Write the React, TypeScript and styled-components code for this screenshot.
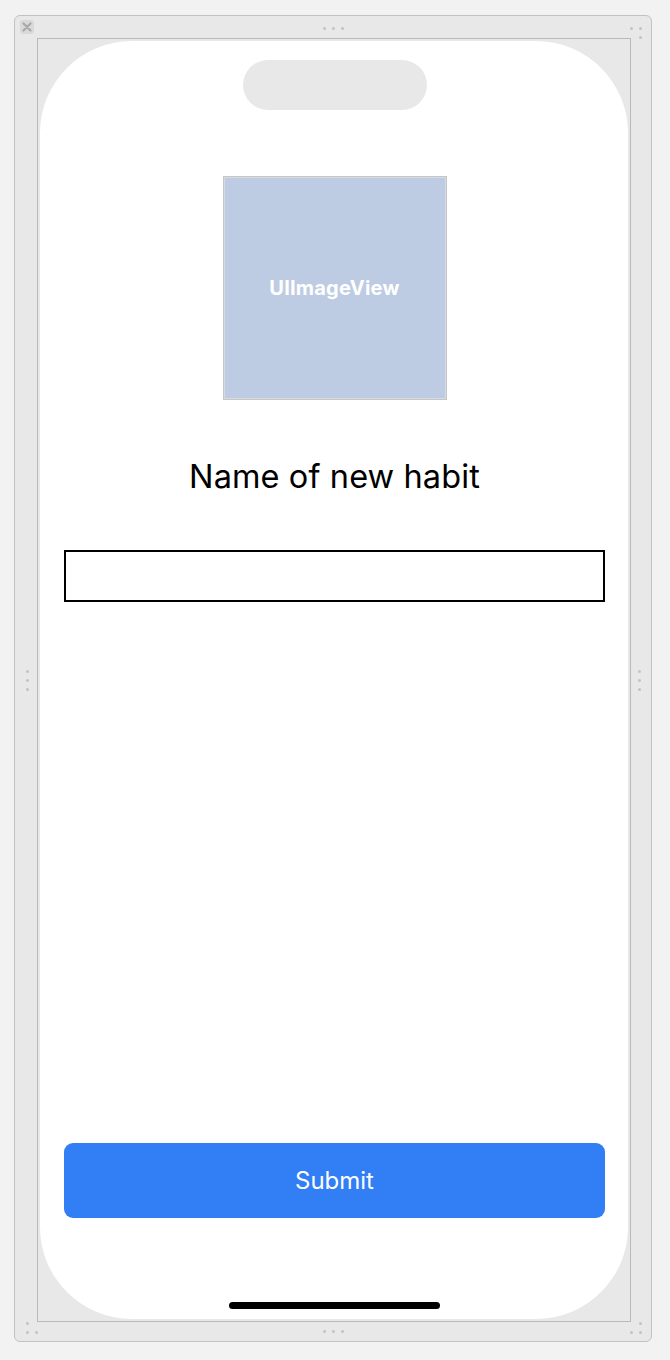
import React from "react";
import styled, { createGlobalStyle } from "styled-components";

const GlobalStyle = createGlobalStyle`
  html, body {
    margin: 0;
    padding: 0;
    background: #f2f2f2;
    font-family: Inter, "Liberation Sans", Arial, sans-serif;
  }
  * { box-sizing: border-box; }
`;

const Canvas = styled.div`
  width: 670px;
  height: 1360px;
  padding: 15px 18px 0 14px;
`;

const Frame = styled.div`
  position: relative;
  width: 638px;
  height: 1327px;
  border: 1px solid #c2c2c2;
  border-radius: 6px;
  background: #e8e8e8;
  padding: 22px 20px 20px 22px;
`;

const CloseButton = styled.div`
  position: absolute;
  left: 5px;
  top: 4px;
  width: 14px;
  height: 14px;
  border-radius: 3px;
  background: #d9d9d9;
  display: flex;
  align-items: center;
  justify-content: center;
`;

const Dots = styled.div<{ $vertical?: boolean }>`
  position: absolute;
  display: flex;
  flex-direction: ${(p) => (p.$vertical ? "column" : "row")};
  gap: 6px;
`;

const Dot = styled.span`
  display: block;
  width: 3px;
  height: 3px;
  border-radius: 50%;
  background: #c3c3c3;
`;

const CornerDots = styled.div`
  position: absolute;
  width: 12px;
  height: 12px;
  display: grid;
  grid-template-columns: 3px 3px;
  grid-template-rows: 3px 3px;
  column-gap: 6px;
  row-gap: 6px;
`;

const Screen = styled.div`
  width: 594px;
  height: 1284px;
  border: 1px solid #b9b9b9;
  padding: 2px;
  background: #e8e8e8;
`;

const Display = styled.div`
  width: 100%;
  height: 100%;
  background: #ffffff;
  border-radius: 92px;
  display: flex;
  flex-direction: column;
  align-items: center;
  padding: 19px 23px 10px 24px;
`;

const Notch = styled.div`
  width: 184px;
  height: 50px;
  border-radius: 25px;
  background: #e8e8e8;
  flex-shrink: 0;
`;

const ImagePlaceholder = styled.div`
  margin-top: 66px;
  width: 224px;
  height: 224px;
  flex-shrink: 0;
  background: #bdcce3;
  border: 1px solid #c6c6c6;
  box-shadow: inset 0 0 0 1px #d6dbe3;
  display: flex;
  align-items: center;
  justify-content: center;
  color: #ffffff;
  font-family: Inter, "Liberation Sans", sans-serif;
  font-weight: 700;
  font-size: 20px;
  letter-spacing: 0.2px;
`;

const Title = styled.h1`
  margin: 58px 0 0 0;
  font-family: Inter, "Liberation Sans", sans-serif;
  font-weight: 400;
  font-size: 32.5px;
  line-height: 38px;
  letter-spacing: 0.1px;
  color: #000000;
  text-align: center;
`;

const TextField = styled.input`
  margin-top: 54px;
  width: 100%;
  height: 52px;
  border: 2px solid #000000;
  border-radius: 0;
  background: #ffffff;
  outline: none;
  padding: 0 8px;
  font-family: Inter, "Liberation Sans", sans-serif;
  font-size: 20px;
  flex-shrink: 0;
`;

const Spacer = styled.div`
  flex: 1;
`;

const SubmitButton = styled.button`
  width: 100%;
  height: 75px;
  flex-shrink: 0;
  border: none;
  border-radius: 9px;
  background: #317ef5;
  color: #ffffff;
  font-family: Inter, "Liberation Sans", sans-serif;
  font-size: 24px;
  font-weight: 400;
  cursor: pointer;
`;

const HomeIndicator = styled.div`
  margin-top: 84px;
  width: 211px;
  height: 7px;
  border-radius: 4px;
  background: #000000;
  flex-shrink: 0;
`;

function DotRow({ vertical, style }: { vertical?: boolean; style: React.CSSProperties }) {
  return (
    <Dots $vertical={vertical} style={style}>
      <Dot />
      <Dot />
      <Dot />
    </Dots>
  );
}

function Corner({ style, cells }: { style: React.CSSProperties; cells: boolean[] }) {
  return (
    <CornerDots style={style}>
      {cells.map((on, i) => (on ? <Dot key={i} /> : <span key={i} />))}
    </CornerDots>
  );
}

export default function App() {
  return (
    <>
      <GlobalStyle />
      <Canvas>
        <Frame>
          <CloseButton>
            <svg width="10" height="10" viewBox="0 0 10 10">
              <path d="M1.5 1.5 L8.5 8.5 M8.5 1.5 L1.5 8.5" stroke="#a9a9a9" strokeWidth="2.2" strokeLinecap="round" />
            </svg>
          </CloseButton>
          <DotRow style={{ left: 308, top: 11 }} />
          <DotRow style={{ left: 308, bottom: 8 }} />
          <DotRow vertical style={{ left: 11, top: 654 }} />
          <DotRow vertical style={{ right: 10, top: 654 }} />
          <Corner style={{ right: 9, top: 11 }} cells={[true, true, false, true]} />
          <Corner style={{ left: 11, bottom: 7 }} cells={[true, false, true, true]} />
          <Corner style={{ right: 9, bottom: 7 }} cells={[false, true, true, true]} />
          <Screen>
            <Display>
              <Notch />
              <ImagePlaceholder>UIImageView</ImagePlaceholder>
              <Title>Name of new habit</Title>
              <TextField type="text" aria-label="Name of new habit" />
              <Spacer />
              <SubmitButton>Submit</SubmitButton>
              <HomeIndicator />
            </Display>
          </Screen>
        </Frame>
      </Canvas>
    </>
  );
}
